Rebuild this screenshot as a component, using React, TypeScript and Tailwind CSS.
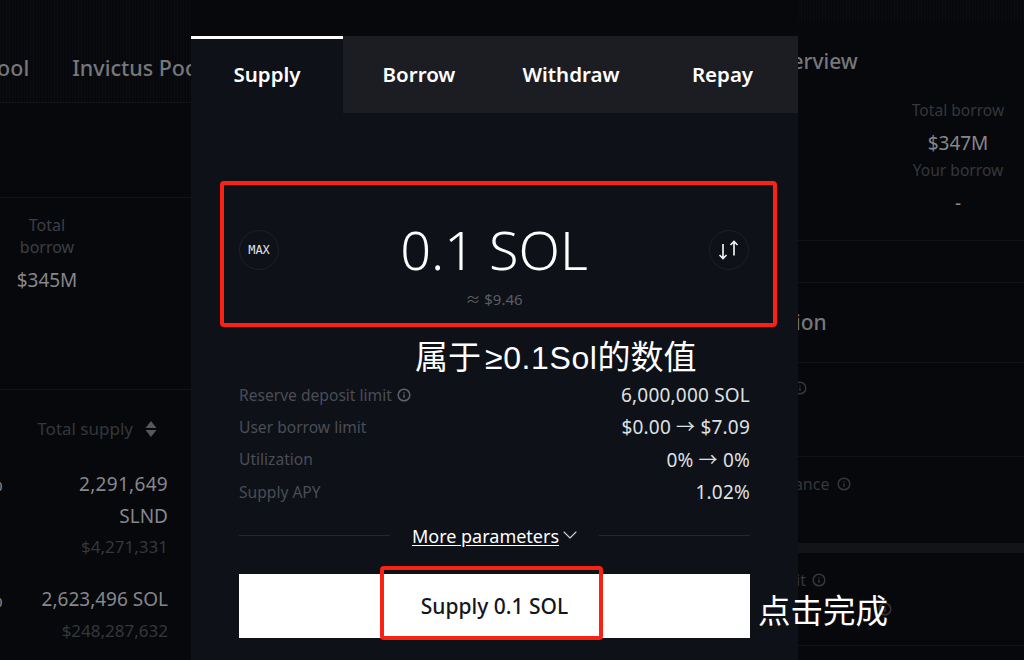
import { ChevronDown, Info } from 'lucide-react';

const band = 'bg-[repeating-linear-gradient(90deg,#0b0c10_0px,#0b0c10_1px,#07080b_1px,#07080b_3px)]';

const params = [
  { label: 'Reserve deposit limit', value: '6,000,000 SOL', info: true },
  { label: 'User borrow limit', value: '$0.00 → $7.09', info: false },
  { label: 'Utilization', value: '0% → 0%', info: false },
  { label: 'Supply APY', value: '1.02%', info: false },
];

function LeftColumn() {
  return (
    <div className="flex w-[191px] shrink-0 flex-col overflow-hidden">
      <div className={`${band} flex h-[103px] shrink-0 items-end gap-[43px] whitespace-nowrap border-b border-[#121317] pb-[20px] text-[21.5px] font-medium leading-[28px] text-[#75777b]`}>
        <span className="ml-[-16px]">Pool</span>
        <span>Invictus Pool</span>
      </div>
      <div className="h-[95px] shrink-0 border-b border-[#121317]" />
      <div className="h-[192px] shrink-0 border-b border-[#121317] pt-[16px]">
        <div className="w-[94px] text-center text-[16px] leading-[22px] text-[#3d3f44]">
          Total
          <br />
          borrow
        </div>
        <div className="mt-[10px] w-[94px] text-center text-[19px] leading-[24px] text-[#85878b]">$345M</div>
      </div>
      <div className="relative flex flex-col items-end pr-[23px] pt-[27px] text-[19px] text-[#85878b]">
        <div className="flex items-center gap-[12px] pr-[11px] text-[#35373b]">
          <span className="text-[17px] leading-[24px]">Total supply</span>
          <svg width="12" height="18" viewBox="0 0 12 18" className="text-[#55575b]">
            <path d="M6 1 L11.5 8 H0.5 Z M0.5 10 H11.5 L6 17 Z" fill="currentColor" />
          </svg>
        </div>
        <div className="mt-[31px] leading-[24px] tracking-[0.3px]">2,291,649</div>
        <div className="mt-[8px] leading-[24px]">SLND</div>
        <div className="mt-[8px] text-[17px] leading-[22px] text-[#35373b]">$4,271,331</div>
        <div className="mt-[29px] leading-[24px]">2,623,496 SOL</div>
        <div className="mt-[9px] text-[17px] leading-[22px] text-[#35373b]">$248,287,632</div>
        <span className="absolute left-[-13px] top-[82px] leading-[24px]">%</span>
        <span className="absolute left-[-13px] top-[198px] leading-[24px]">%</span>
      </div>
    </div>
  );
}

function RightColumn() {
  return (
    <div className="flex min-w-0 flex-1 flex-col overflow-hidden">
      <div className={`${band} h-[22px] shrink-0`} />
      <div className="h-[219px] shrink-0 border-b border-[#121317]">
        <div className="ml-[-34px] mt-[25px] whitespace-nowrap text-[21px] font-medium leading-[28px] text-[#75777b]">Overview</div>
        <div className="mt-[24px] flex flex-col items-center pl-[94px]">
          <div className="whitespace-nowrap text-[15.6px] leading-[22px] text-[#35373b]">Total borrow</div>
          <div className="mt-[10px] text-[19px] leading-[24px] text-[#85878b]">$347M</div>
          <div className="mt-[4px] whitespace-nowrap text-[15.6px] leading-[22px] text-[#35373b]">Your borrow</div>
          <div className="mt-[10px] text-[19px] leading-[24px] text-[#85878b]">-</div>
        </div>
      </div>
      <div className="h-[42px] shrink-0 border-b border-[#121317]" />
      <div className="h-[80px] shrink-0 border-b border-[#121317] pt-[25px]">
        <div className="ml-[-3px] whitespace-nowrap text-[21px] font-medium leading-[28px] text-[#75777b]">ion</div>
      </div>
      <div className="h-[94px] shrink-0 border-b border-[#121317] pt-[18px] text-[#35373b]">
        <Info size={14} strokeWidth={2.5} className="ml-[-5px]" />
      </div>
      <div className="flex h-[86px] shrink-0 items-start pt-[16px] text-[#35373b]">
        <span className="ml-[-14px] text-[16px] leading-[22px]">nance</span>
        <Info size={14} strokeWidth={2.5} className="ml-[8px] mt-[4px]" />
      </div>
      <div className="h-[10px] shrink-0 bg-[#131418]" />
      <div className="flex h-[93px] shrink-0 flex-col border-b border-[#121317] text-[#35373b]">
        <div className="mt-[16px] flex items-center">
          <span className="ml-[-2px] text-[16px] leading-[22px]">it</span>
          <Info size={14} strokeWidth={2.5} className="ml-[6px]" />
        </div>
        <Info size={14} strokeWidth={2.5} className="ml-[80px] mt-[11px]" />
      </div>
    </div>
  );
}

function Modal() {
  return (
    <div className="z-10 mt-[36px] flex w-[607px] shrink-0 flex-col bg-[#0e1118]">
      <div className="flex h-[77px] shrink-0 bg-[#1c1d22] text-[20.5px] font-semibold text-white">
        <div className="flex w-[152px] items-center justify-center border-t-[3px] border-white bg-[#0e1118] pb-[3px]">Supply</div>
        <div className="flex w-[152px] items-center justify-center">Borrow</div>
        <div className="flex w-[152px] items-center justify-center">Withdraw</div>
        <div className="flex w-[151px] items-center justify-center">Repay</div>
      </div>

      <div className="ml-[29px] mr-[21px] mt-[68px] flex h-[146px] items-center justify-between rounded-[4px] border-[4px] border-[#fb2113] pl-[15px] pr-[24px]">
        <div className="mb-[8px] flex size-[40px] items-center justify-center rounded-full border border-[#1e2026] pb-[1px] font-['DejaVu_Sans_Mono',monospace] text-[12px] text-[#e4e4e6]">
          MAX
        </div>
        <div className="flex flex-col items-center pt-[18px]">
          <div className="text-[54px] font-light leading-[62px] text-white">0.1 SOL</div>
          <div className="mt-[9px] text-[15px] leading-[20px] text-[#5a5d63]">≈ $9.46</div>
        </div>
        <div className="mb-[8px] flex size-[40px] items-center justify-center rounded-full border border-[#1e2026]">
          <svg width="24" height="24" viewBox="0 0 24 24" fill="none" stroke="#eeeeee" strokeWidth="1.7">
            <path d="M6 6 V20.5 M2.5 17 L6 20.5 L9.5 17" />
            <path d="M17 17.5 V3.5 M13.5 7 L17 3.5 L20.5 7" />
          </svg>
        </div>
      </div>

      <div className="mt-[10px] whitespace-nowrap pl-[224px] text-[33px] leading-[40px] text-white">
        属于<span className="pl-[4px] font-['Liberation_Sans',sans-serif] text-[32px] tracking-[0.6px]">≥0.1Sol</span>的数值
      </div>

      <div className="mx-[48px] mt-[1px] flex flex-col">
        {params.map((row) => (
          <div key={row.label} className="flex h-[32.4px] items-center justify-between">
            <span className="flex items-center gap-[5px] text-[15.6px] text-[#4a4d54]">
              {row.label}
              {row.info && <Info size={14} strokeWidth={2.5} className="text-[#62646a]" />}
            </span>
            <span className="text-[19px] tracking-[0.2px] text-[#dfe0e2]">{row.value}</span>
          </div>
        ))}
      </div>

      <div className="mx-[48px] mt-[15px] flex items-center">
        <div className="h-px flex-1 bg-[#25272d]" />
        <span className="ml-[22px] text-[18px] leading-[24px] text-white underline underline-offset-2">More parameters</span>
        <ChevronDown size={24} strokeWidth={1.1} className="ml-[-1px] mt-[-2px] text-[#cfd0d2]" />
        <div className="ml-[17px] h-px flex-1 bg-[#25272d]" />
      </div>

      <div className="relative mx-[48px] mt-[26px] flex h-[64px] shrink-0 items-center justify-center bg-white pt-[2px] text-[21px] font-medium text-[#14161d]">
        Supply 0.1 SOL
        <div className="absolute left-[141px] top-[-8px] h-[74px] w-[223px] rounded-[4px] border-[4px] border-[#fb2113]" />
        <span className="absolute left-[519px] top-[17px] whitespace-nowrap text-[32.5px] font-normal leading-[40px] text-white">
          点击完成
        </span>
      </div>
    </div>
  );
}

export default function App() {
  return (
    <div className="flex h-[660px] w-[1024px] overflow-hidden bg-[#07080c] font-['Noto_Sans','Noto_Sans_CJK_SC',sans-serif]">
      <LeftColumn />
      <Modal />
      <RightColumn />
    </div>
  );
}
